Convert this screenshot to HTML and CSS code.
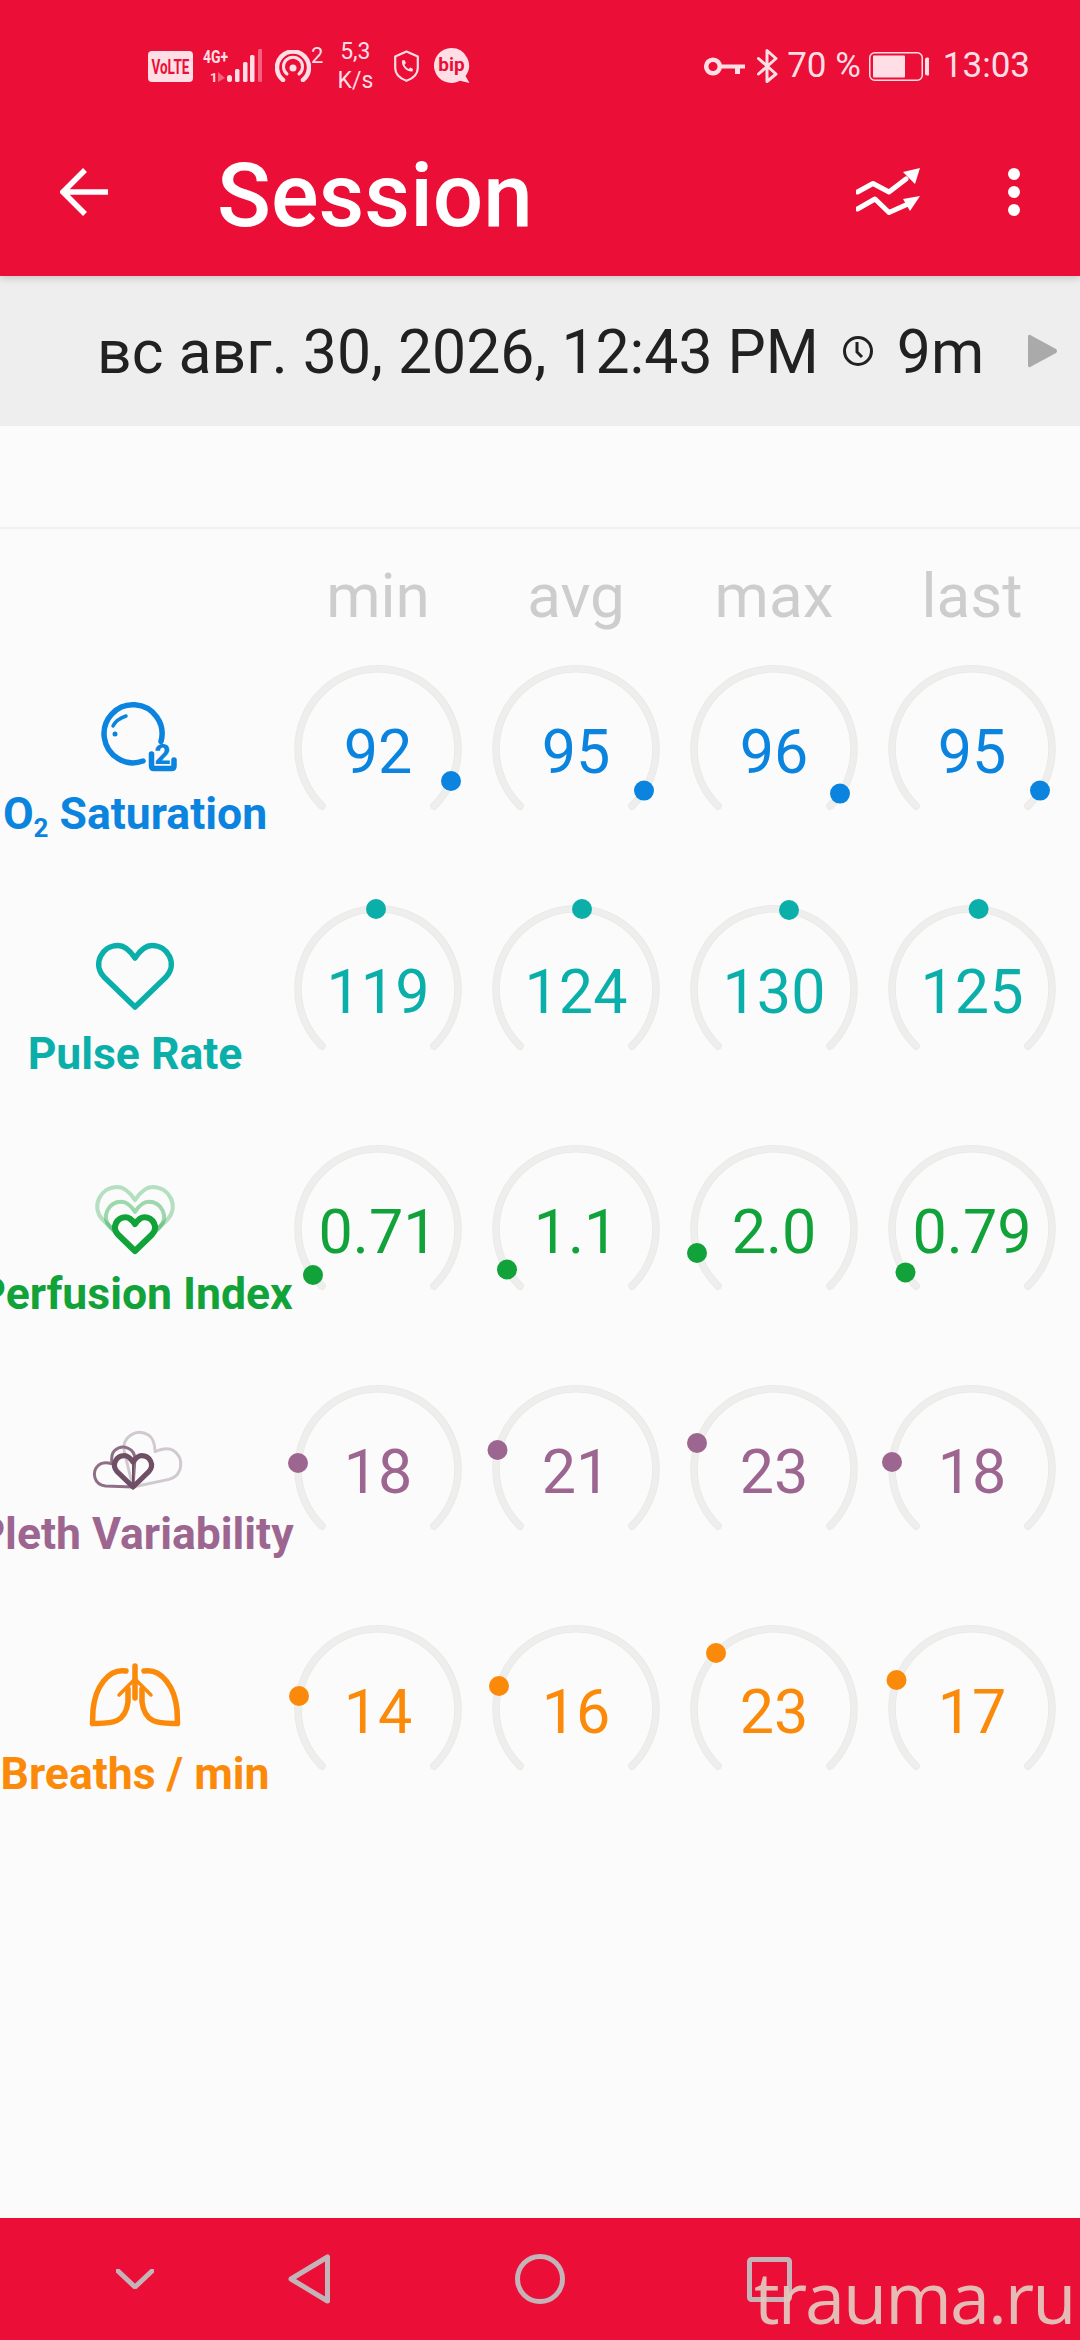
FILE: index.html
```html
<!DOCTYPE html>
<html lang="en">
<head>
<meta charset="utf-8">
<title>Session</title>
<link rel="stylesheet" href="styles.css">
</head>
<body>
<svg class="defs" width="0" height="0">
  <defs>
    <g id="arc">
      <path class="arc-edge" d="M43 166A80 80 0 1 1 155 166"/>
      <path class="arc-fill" d="M43 166A80 80 0 1 1 155 166"/>
    </g>
    <path id="heart" d="M60 75L29 45C17 32 27 13.5 43 13.5C50 13.5 56 20 60 26C64 20 70 13.5 77 13.5C93 13.5 103 32 91 45Z"/>
  </defs>
</svg>
<div class="page">
  <header class="appbar">
    <div class="status">
      <div class="status-left">
        <svg class="st-volte" width="45" height="31" viewBox="0 0 45 31"><rect class="st-fill" width="45" height="31" rx="4"/><text class="st-volte-text" transform="translate(3.500 22.500) scale(1 1.500)">VoLTE</text></svg>
        <svg class="st-net" width="59" height="42" viewBox="0 -4 59 42">
          <text class="st-net-text" transform="translate(0 14) scale(1 1.250)">4G+</text>
          <text class="st-net-text small" x="7" y="33">1</text>
          <path class="st-fill faint" d="M15 23L22 29L15 33Z"/>
          <rect class="st-fill" x="24" y="26" width="5" height="7" rx="2.500"/>
          <rect class="st-fill" x="32" y="20" width="4.500" height="13" rx="1.500"/>
          <rect class="st-fill" x="40" y="13" width="4.500" height="20" rx="1.500"/>
          <rect class="st-fill" x="47" y="6" width="4.500" height="27" rx="1.500"/>
          <rect class="st-fill faint" x="55" y="0" width="4.500" height="33" rx="1.500"/>
        </svg>
        <div class="st-hotspot">
          <svg width="36" height="32" viewBox="0 0 36 32"><path class="st-line thick" d="M8 30A16 16 0 1 1 28 30"/><path class="st-line" d="M12 24A9.500 9.500 0 1 1 24 24"/><circle class="st-fill" cx="18" cy="18" r="3.500"/></svg>
          <span class="st-sup">2</span>
        </div>
        <div class="st-speed"><span>5,3</span><span>K/s</span></div>
        <svg class="st-shield" width="25" height="32" viewBox="0 0 25 32"><path class="st-line thin" d="M12.500 1.500L23.800 6.500V18C23.800 24.500 18 28.800 12.500 30.800C7 28.800 1.200 24.500 1.200 18V6.500Z"/><path class="st-fill" d="M8 10.500L10.500 10L12 13L10.500 14.500C11.300 16.500 12.700 18 14.800 19L16.200 17.500L19 19L18.500 21.500C13 22.500 7 16 8 10.500Z"/></svg>
        <svg class="st-bip" width="36" height="36" viewBox="0 0 36 36"><path class="st-fill" d="M17.500 0A17.500 17.500 0 1 0 26 32.800L35.500 35L31.500 28A17.500 17.500 0 0 0 17.500 0Z"/><text class="st-bip-text" x="17.500" y="23" text-anchor="middle">bip</text></svg>
      </div>
      <div class="status-right">
        <svg width="41" height="19" viewBox="0 0 41 19"><circle class="st-line thick" cx="9" cy="9.500" r="6.800"/><path class="st-fill" d="M15 7.500H41V11.500H36V17H31V11.500H15Z"/></svg>
        <svg class="st-bt" width="21" height="34" viewBox="0 0 21 34"><path class="st-line" d="M1.500 9.500L19 25L10 32.500V1.500L19 9.500L1.500 25"/></svg>
        <span class="st-text st-pct">70 %</span>
        <svg class="st-batt" width="60" height="29" viewBox="0 0 60 29"><rect class="st-line hair" x="0.750" y="0.750" width="52.500" height="27.500" rx="5"/><rect class="st-fill" x="4" y="3.500" width="32" height="22" rx="1"/><rect class="st-fill" x="56" y="5.500" width="4.500" height="18" rx="2"/></svg>
        <span class="st-text st-time">13:03</span>
      </div>
    </div>
    <div class="toolbar">
      <svg class="back" width="48" height="48" viewBox="0 0 48 48"><path d="M48 24H3M25 2L3 24L25 46"/></svg>
      <h1 class="title">Session</h1>
      <svg class="trend" width="64" height="47" viewBox="0 0 64 47"><path class="trend-line" d="M1.500 24L17 15.500L33 24L50 11M1.500 41L19 31L33 44.500L52 36"/><path class="trend-head" d="M64 0L47 4L59 16ZM64 28L47 31L54 43Z"/></svg>
      <div class="more"><i></i><i></i><i></i></div>
    </div>
  </header>

  <div class="datebar">
    <span class="date">вс авг. 30, 2026, 12:43 PM</span>
    <svg class="clock" width="32" height="32" viewBox="0 0 32 32"><circle cx="16" cy="16" r="13.500"/><path d="M15 7V17L20 22"/></svg>
    <span class="dur">9m</span>
    <svg class="next" width="30" height="34" viewBox="0 0 30 34"><path d="M0 3Q0 -1 4 2L28 15Q30 17 28 19L4 32Q0 35 0 31Z"/></svg>
  </div>

  <main class="content">
    <div class="spacer"></div>
    <div class="head-row">
      <span>min</span><span>avg</span><span>max</span><span>last</span>
    </div>

    <section class="row c-o2">
      <div class="metric">
        <svg class="mi" width="120" height="84" viewBox="0 0 120 84">
          <path class="mi-line" d="M68 69A29 29 0 1 1 86 49.500"/>
          <path class="mi-line thin" d="M38 34C40 30 45 26 51 24"/>
          <circle class="mi-fill" cx="40" cy="42" r="2.500"/>
          <path class="mi-line" d="M76.500 62V74Q76.500 76.500 79 76.500H96.500Q99 76.500 99 74V68"/>
          <text class="mi-two" x="87.500" y="71.500" text-anchor="middle">2</text>
        </svg>
        <div class="label">O<span class="sub">2</span> Saturation</div>
      </div>
      <div class="gauge"><svg class="dial" width="198" height="240"><use href="#arc"/><circle class="dot" cx="172" cy="141" r="10"/></svg><span class="val">92</span></div>
      <div class="gauge"><svg class="dial" width="198" height="240"><use href="#arc"/><circle class="dot" cx="167" cy="150.600" r="10"/></svg><span class="val">95</span></div>
      <div class="gauge"><svg class="dial" width="198" height="240"><use href="#arc"/><circle class="dot" cx="165" cy="153.600" r="10"/></svg><span class="val">96</span></div>
      <div class="gauge"><svg class="dial" width="198" height="240"><use href="#arc"/><circle class="dot" cx="167" cy="150.600" r="10"/></svg><span class="val">95</span></div>
    </section>

    <section class="row c-pulse">
      <div class="metric">
        <svg class="mi" width="120" height="84" viewBox="0 0 120 84"><use class="mi-line" href="#heart"/></svg>
        <div class="label">Pulse Rate</div>
      </div>
      <div class="gauge"><svg class="dial" width="198" height="240"><use href="#arc"/><circle class="dot" cx="97" cy="29" r="10"/></svg><span class="val">119</span></div>
      <div class="gauge"><svg class="dial" width="198" height="240"><use href="#arc"/><circle class="dot" cx="105" cy="29" r="10"/></svg><span class="val">124</span></div>
      <div class="gauge"><svg class="dial" width="198" height="240"><use href="#arc"/><circle class="dot" cx="114" cy="30" r="10"/></svg><span class="val">130</span></div>
      <div class="gauge"><svg class="dial" width="198" height="240"><use href="#arc"/><circle class="dot" cx="105.600" cy="29" r="10"/></svg><span class="val">125</span></div>
    </section>

    <section class="row c-perf">
      <div class="metric">
        <svg class="mi" width="120" height="84" viewBox="0 0 120 84">
          <use class="mi-line h-large" href="#heart" transform="translate(60 79) scale(1.040) translate(-60 -75)"/>
          <use class="mi-line h-mid" href="#heart" transform="translate(60 79) scale(0.800) translate(-60 -75)"/>
          <use class="mi-line h-small" href="#heart" transform="translate(60 79) scale(0.550) translate(-60 -75)"/>
        </svg>
        <div class="label">Perfusion Index</div>
      </div>
      <div class="gauge"><svg class="dial" width="198" height="240"><use href="#arc"/><circle class="dot" cx="34" cy="155" r="10"/></svg><span class="val">0.71</span></div>
      <div class="gauge"><svg class="dial" width="198" height="240"><use href="#arc"/><circle class="dot" cx="30" cy="149.500" r="10"/></svg><span class="val">1.1</span></div>
      <div class="gauge"><svg class="dial" width="198" height="240"><use href="#arc"/><circle class="dot" cx="22" cy="133" r="10"/></svg><span class="val">2.0</span></div>
      <div class="gauge"><svg class="dial" width="198" height="240"><use href="#arc"/><circle class="dot" cx="32.500" cy="152.400" r="10"/></svg><span class="val">0.79</span></div>
    </section>

    <section class="row c-pleth">
      <div class="metric">
        <svg class="mi" width="120" height="84" viewBox="0 0 120 84">
          <use class="pl-far" href="#heart" transform="translate(58 75) rotate(32) scale(0.850) translate(-60 -75)"/>
          <use class="pl-mid" href="#heart" transform="translate(58 75) rotate(-42) scale(0.640) translate(-60 -75)"/>
          <use class="pl-front" href="#heart" transform="translate(58 75) scale(0.510) translate(-60 -75)"/>
          <path class="pl-stem" d="M58 52V75"/>
        </svg>
        <div class="label">Pleth Variability</div>
      </div>
      <div class="gauge"><svg class="dial" width="198" height="240"><use href="#arc"/><circle class="dot" cx="19" cy="103" r="10"/></svg><span class="val">18</span></div>
      <div class="gauge"><svg class="dial" width="198" height="240"><use href="#arc"/><circle class="dot" cx="20.500" cy="90" r="10"/></svg><span class="val">21</span></div>
      <div class="gauge"><svg class="dial" width="198" height="240"><use href="#arc"/><circle class="dot" cx="22" cy="83" r="10"/></svg><span class="val">23</span></div>
      <div class="gauge"><svg class="dial" width="198" height="240"><use href="#arc"/><circle class="dot" cx="19" cy="102" r="10"/></svg><span class="val">18</span></div>
    </section>

    <section class="row c-resp">
      <div class="metric">
        <svg class="mi" width="120" height="84" viewBox="0 0 120 84">
          <path class="mi-line" d="M51 19C33 16 20 36 18 58L17.500 71.500C32 71 50 74 53 50V37"/>
          <path class="mi-line" d="M69 19C87 16 100 36 102 58L102.500 71.500C88 71 70 74 67 50V37"/>
          <path class="mi-line" d="M60 14V46"/>
          <path class="mi-line thin" d="M60 27L44 43M60 27L76 43"/>
        </svg>
        <div class="label">Breaths / min</div>
      </div>
      <div class="gauge"><svg class="dial" width="198" height="240"><use href="#arc"/><circle class="dot" cx="20" cy="96" r="10"/></svg><span class="val">14</span></div>
      <div class="gauge"><svg class="dial" width="198" height="240"><use href="#arc"/><circle class="dot" cx="22" cy="86" r="10"/></svg><span class="val">16</span></div>
      <div class="gauge"><svg class="dial" width="198" height="240"><use href="#arc"/><circle class="dot" cx="41" cy="53" r="10"/></svg><span class="val">23</span></div>
      <div class="gauge"><svg class="dial" width="198" height="240"><use href="#arc"/><circle class="dot" cx="23.500" cy="80" r="10"/></svg><span class="val">17</span></div>
    </section>
  </main>

  <nav class="navbar">
    <svg class="nv-chev" width="38" height="20" viewBox="0 0 38 20"><path d="M2 2L19 18L36 2"/></svg>
    <svg class="nv-back" width="42" height="50" viewBox="0 0 42 50"><path d="M39.500 3V47L3 25Z"/></svg>
    <svg class="nv-home" width="50" height="50" viewBox="0 0 50 50"><circle cx="25" cy="25" r="22.500"/></svg>
    <svg class="nv-rec" width="45" height="45" viewBox="0 0 45 45"><rect x="2.500" y="2.500" width="40" height="40" rx="2"/></svg>
    <span class="watermark">trauma.ru</span>
  </nav>
</div>
</body>
</html>
```

FILE: styles.css
```css
* { box-sizing: border-box; }
html, body { margin: 0; padding: 0; }
body {
  width: 1080px;
  height: 2340px;
  overflow: hidden;
  background: #fbfbfb;
  font-family: Roboto, "Noto Sans CJK SC", sans-serif;
}
.defs { display: block; height: 0; }
.page { display: flex; flex-direction: column; height: 2340px; }

/* app bar */
.appbar {
  background: #eb0e36;
  height: 276px;
  position: relative;
  z-index: 2;
  box-shadow: 0 2px 8px rgba(0,0,0,.18);
  flex: none;
}
.status {
  height: 108px;
  padding: 24px 50px 0 148px;
  display: flex;
  align-items: center;
  justify-content: space-between;
  color: #ffdfe5;
}
.status-left, .status-right { display: flex; align-items: center; }
.st-fill { fill: #ffdfe5; }
.st-fill.faint { opacity: .4; }
.st-line { fill: none; stroke: #ffdfe5; stroke-width: 3; stroke-linecap: round; stroke-linejoin: round; }
.st-line.thick { stroke-width: 4.500; }
.st-line.thin { stroke-width: 2.200; }
.st-line.hair { stroke-width: 1.500; }
.st-volte-text { font: 700 13.500px Roboto, sans-serif; fill: #eb0e36; }
.st-net { margin-left: 10px; }
.st-net-text { font: 700 14px Roboto, sans-serif; fill: #ffdfe5; }
.st-net-text.small { font-size: 13px; }
.st-hotspot { display: flex; align-items: flex-start; margin-left: 13px; }
.st-sup { font-size: 22px; line-height: 22px; margin-top: -5px; }
.st-speed {
  display: flex;
  flex-direction: column;
  align-items: center;
  width: 40px;
  margin-left: 12px;
  font-size: 23px;
  line-height: 29px;
}
.st-shield { margin-left: 19px; }
.st-bip { margin-left: 15px; }
.st-bip-text { font: 700 19px Roboto, sans-serif; fill: #eb0e36; }
.st-bt { margin-left: 12px; }
.st-text { font-size: 35px; line-height: 40px; }
.st-pct { margin-left: 9px; }
.st-batt { margin-left: 8px; }
.st-time { margin-left: 14px; }

.toolbar {
  height: 168px;
  display: flex;
  align-items: center;
  padding: 0 60px;
}
.back { flex: none; }
.back path { fill: none; stroke: #fff; stroke-width: 5.500; }
.title {
  margin: 8px 0 0 109px;
  font-size: 89px;
  font-weight: 500;
  line-height: 100px;
  color: #fff;
  flex: 1;
}
.trend { flex: none; margin-top: -2px; }
.trend-line { fill: none; stroke: #fff; stroke-width: 5; stroke-linecap: round; stroke-linejoin: round; }
.trend-head { fill: #fff; }
.more { display: flex; flex-direction: column; gap: 6px; margin-left: 88px; }
.more i { display: block; width: 12px; height: 12px; border-radius: 50%; background: #fff; }

/* date bar */
.datebar {
  height: 150px;
  background: #eeeeee;
  display: flex;
  align-items: center;
  padding-left: 97px;
  color: #212121;
  font-size: 60.700px;
  flex: none;
}
.date { white-space: nowrap; margin-top: 2px; }
.clock { margin-left: 23px; flex: none; }
.clock circle, .clock path { fill: none; stroke: #212121; stroke-width: 3; }
.dur { margin-left: 23px; margin-top: 2px; }
.next { margin-left: 44px; fill: #aaaaaa; flex: none; }

/* table */
.content { flex: 1; }
.spacer { height: 103px; border-bottom: 2px solid #f1f1f1; }
.head-row {
  height: 111px;
  display: grid;
  grid-template-columns: repeat(4, 198px);
  padding-left: 279px;
  padding-top: 32px;
  color: #cdcdcd;
  font-size: 62px;
  line-height: 70px;
  text-align: center;
}
.row {
  height: 240px;
  display: grid;
  grid-template-columns: 279px repeat(4, 198px);
}
.c-o2 { color: #0a84de; }
.c-pulse { color: #0bafaa; }
.c-perf { color: #12a23a; }
.c-pleth { color: #9d6690; }
.c-resp { color: #fb8a0a; }

.metric {
  display: flex;
  flex-direction: column;
  align-items: center;
  padding: 52px 9px 0 0;
  min-width: 0;
}
.mi { display: block; flex: none; }
.mi-line { fill: none; stroke: currentColor; stroke-width: 5.500; stroke-linejoin: round; stroke-linecap: round; }
.mi-line.thin { stroke-width: 3.500; }
.mi-fill { fill: currentColor; }
.mi-two { font: 900 28px Roboto, sans-serif; fill: currentColor; }
.mi-line.h-large { stroke-width: 4; opacity: .3; }
.mi-line.h-mid { stroke-width: 5; opacity: .4; }
.mi-line.h-small { stroke-width: 11; }
.pl-far, .pl-mid, .pl-front { fill: none; stroke-linejoin: round; }
.pl-far { stroke: #d2c8d0; stroke-width: 3.500; }
.pl-mid { stroke: #8f6f88; stroke-width: 4.700; }
.pl-front { stroke: #6f4e66; stroke-width: 10; }
.pl-stem { fill: none; stroke: #6f4e66; stroke-width: 2; }
.label {
  margin-top: 13px;
  font-size: 44.500px;
  font-weight: 700;
  line-height: 50px;
  white-space: nowrap;
}
.sub { font-size: 26px; vertical-align: -8px; line-height: 0; }

.gauge {
  position: relative;
  display: flex;
  justify-content: center;
  padding-top: 77px;
}
.dial { position: absolute; left: 0; top: 0; overflow: visible; }
.arc-edge { fill: none; stroke: #ebe8e0; stroke-width: 7.500; stroke-linecap: round; }
.arc-fill { fill: none; stroke: #eeeeee; stroke-width: 6; stroke-linecap: round; }
.dot { fill: currentColor; }
.val {
  position: relative;
  font-size: 61px;
  line-height: 70px;
}

/* nav */
.navbar {
  height: 122px;
  background: #eb0e36;
  position: relative;
  display: flex;
  align-items: center;
  padding-left: 116px;
  flex: none;
}
.nv-chev path, .nv-back path, .nv-home circle, .nv-rec rect {
  fill: none;
  stroke: #c4b3b9;
  stroke-width: 5;
  stroke-linejoin: round;
  stroke-linecap: round;
}
.nv-back { margin-left: 134px; }
.nv-home { margin-left: 185px; }
.nv-rec { margin-left: 182px; }
.watermark {
  position: absolute;
  left: 754px;
  top: 42px;
  font-family: "Open Sans", sans-serif;
  font-size: 72px;
  line-height: 72px;
  letter-spacing: -2px;
  color: #e4c6bc;
  opacity: .95;
  white-space: nowrap;
}
```
